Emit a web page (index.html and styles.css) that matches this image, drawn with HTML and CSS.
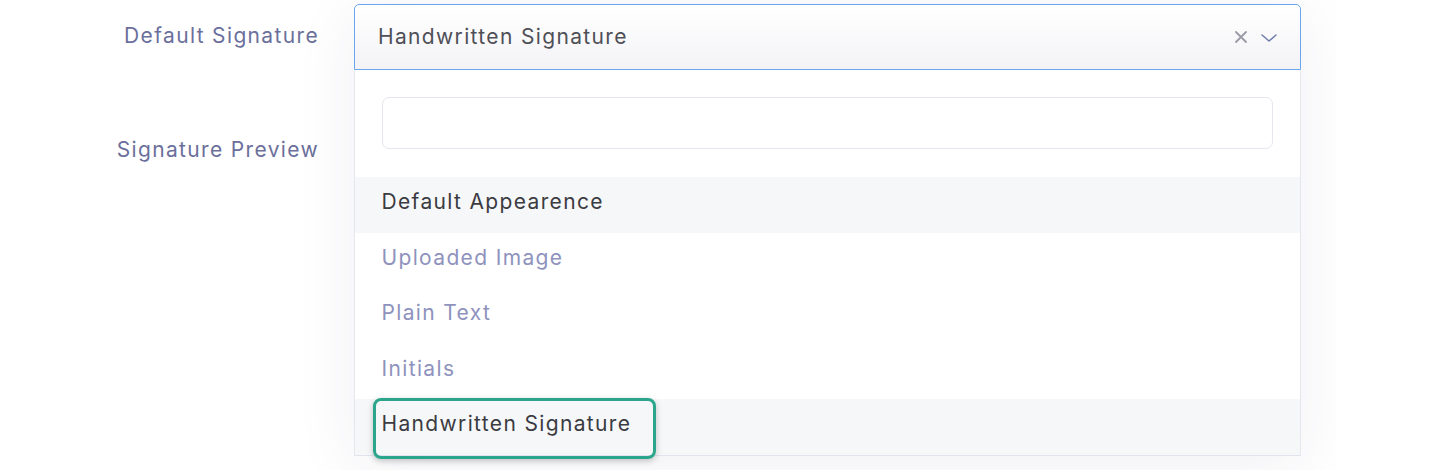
FILE: index.html
```html
<!DOCTYPE html>
<html>
<head>
<meta charset="utf-8">
<link rel="stylesheet" href="styles.css">
</head>
<body>
<div class="frame">
  <div class="form">
    <div class="labels">
      <div class="label first">Default Signature</div>
      <div class="label second">Signature Preview</div>
    </div>
    <div class="field">
      <div class="select">
        <span class="value">Handwritten Signature</span>
        <span class="icons">
          <svg class="clear" width="14" height="14" viewBox="0 0 14 14"><path d="M2 2 L12 12 M12 2 L2 12" stroke="#9a9aa6" stroke-width="1.8" fill="none" stroke-linecap="round"/></svg>
          <svg class="chev" width="18" height="10" viewBox="0 0 18 10"><path d="M2 2 L9 8 L16 2" stroke="#6f7cab" stroke-width="1.5" fill="none" stroke-linecap="round" stroke-linejoin="round"/></svg>
        </span>
      </div>
      <div class="panel">
        <div class="search"><input class="search-input" type="text"></div>
        <ul class="options">
          <li class="opt active">Default Appearence</li>
          <li class="opt">Uploaded Image</li>
          <li class="opt">Plain Text</li>
          <li class="opt">Initials</li>
          <li class="opt active selected">Handwritten Signature<span class="highlight"></span></li>
        </ul>
      </div>
    </div>
  </div>
</div>
</body>
</html>
```
FILE: styles.css
```css
* { box-sizing: border-box; }
html, body { margin: 0; padding: 0; background: #fff; }
body { font-family: Inter, "Noto Sans", sans-serif; width: 1442px; height: 470px; overflow: hidden; }
.frame { width: 1336px; height: 470px; overflow: hidden; }
.form { display: flex; padding-top: 4px; }
.labels { width: 354px; padding-right: 35px; display: flex; flex-direction: column; align-items: flex-end; }
.label { color: #6b6f9b; font-size: 21px; letter-spacing: 1.35px; }
.label.first { margin-top: 19px; line-height: 26px; }
.label.second { margin-top: 88px; line-height: 26px; }
.field { width: 947px; box-shadow: 0 10px 60px rgba(40, 40, 100, 0.07); }
.select { height: 66px; border: 1.5px solid #6aa6ec; border-radius: 5px 5px 0 0; background: linear-gradient(#ffffff, #f3f3f6); display: flex; align-items: center; padding: 0 22px 2px 23px; }
.value { flex: 1; color: #4f4f57; font-size: 21px; letter-spacing: 1.35px; }
.icons { display: flex; align-items: center; gap: 12px; padding-top: 2px; }
.clear { display: block; }
.chev { display: block; margin-top: 1px; }
.panel { background: #fff; border-left: 1.5px solid #e6e6ee; border-right: 1.5px solid #e6e6ee; border-bottom: 1.5px solid #e3e3ee; padding-top: 27px; }
.search { padding: 0 27px 0 26.5px; }
.search-input { display: block; width: 100%; height: 52px; border: 1.5px solid #e6e6ee; border-radius: 7px; background: #fff; outline: none; }
.options { list-style: none; margin: 28px 0 0; padding: 0; }
.opt { height: 55.5px; line-height: 49px; padding-left: 26.5px; font-size: 21px; color: #8e92bd; position: relative; letter-spacing: 1.35px; }
.opt.active { background: #f6f7f9; color: #3b3b42; }
.opt.selected { height: 56px; }
.highlight { position: absolute; left: 17.5px; top: -1px; width: 283px; height: 61px; border: 3px solid #2ba58b; border-radius: 8px; box-shadow: 0 2px 6px rgba(0, 0, 0, 0.22); pointer-events: none; }
```
